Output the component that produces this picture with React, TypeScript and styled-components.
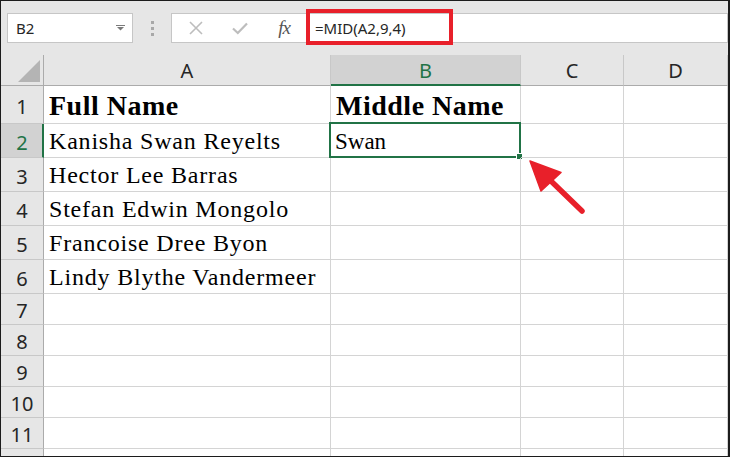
import React from 'react';
import styled, { createGlobalStyle } from 'styled-components';

const GlobalStyle = createGlobalStyle`
  html, body {
    margin: 0;
    padding: 0;
    background: #ffffff;
  }
  * {
    box-sizing: border-box;
  }
`;

const UI_FONT = `"Segoe UI", "Noto Sans", "Open Sans", sans-serif`;
const CELL_FONT = `"Liberation Serif", "Times New Roman", serif`;
const GREEN = '#217346';

// E is only partly in view, so its header letter stays off screen
const COLUMNS = ['A', 'B', 'C', 'D', 'E'];
const VISIBLE_COLUMNS = ['A', 'B', 'C', 'D'];
const COL_WIDTHS = [43, 287, 190, 103, 104, 104];
const ROW_HEIGHTS = [31, 38, 34, 34, 34, 34, 34, 31, 31, 31, 31, 31, 31];
const LAST_LABELLED_ROW = 11;

const NAMES = [
  'Kanisha Swan Reyelts',
  'Hector Lee Barras',
  'Stefan Edwin Mongolo',
  'Francoise Dree Byon',
  'Lindy Blythe Vandermeer'
];

const Frame = styled.div`
  position: relative;
  width: 730px;
  height: 457px;
  overflow: hidden;
  background: #e6e6e6;
  border: 1px solid #1c1c1c;
  border-right-width: 2px;
  display: flex;
  flex-direction: column;
  font-family: ${UI_FONT};
`;

const Toolbar = styled.div`
  height: 54px;
  flex: none;
  display: flex;
  align-items: flex-start;
  padding: 12px 0 0 6px;
`;

const NameBox = styled.div`
  width: 126px;
  height: 30px;
  background: #ffffff;
  border: 1px solid #c6c6c6;
  display: flex;
  align-items: center;
  justify-content: space-between;
  padding: 0 7px 0 8px;
  font-size: 15px;
  color: #262626;
`;

const Grip = styled.div`
  width: 38px;
  height: 30px;
  display: flex;
  flex-direction: column;
  align-items: center;
  justify-content: center;
  gap: 3px;

  span {
    width: 3px;
    height: 3px;
    background: #a8a8a8;
  }
`;

const FormulaTools = styled.div`
  width: 135px;
  height: 30px;
  background: #ffffff;
  border: 1px solid #c6c6c6;
  border-right: none;
  display: flex;
  align-items: center;
  padding-left: 2px;
`;

const ToolSlot = styled.div`
  width: 45px;
  height: 28px;
  display: flex;
  align-items: center;
  justify-content: center;
`;

const FxLabel = styled.span`
  font-family: ${CELL_FONT};
  font-style: italic;
  font-size: 19px;
  color: #555555;
  letter-spacing: -1px;
`;

const FormulaInput = styled.div`
  flex: 1;
  height: 30px;
  background: #ffffff;
  border: 1px solid #c6c6c6;
  display: flex;
  align-items: center;
  padding-left: 8px;
  font-size: 15px;
  color: #262626;
`;

const Highlight = styled.div`
  position: absolute;
  left: 305px;
  top: 8px;
  width: 147px;
  height: 36px;
  border: 4px solid #e8202a;
`;

const Sheet = styled.div`
  flex: 1;
  display: grid;
  grid-template-columns: ${COL_WIDTHS.map((w) => `${w}px`).join(' ')};
  grid-template-rows: ${ROW_HEIGHTS.map((h) => `${h}px`).join(' ')};
  background: #ffffff;
`;

const Corner = styled.div`
  background: #e6e6e6;
  border-right: 1px solid #ababab;
  border-bottom: 1px solid #ababab;
  display: flex;
  align-items: flex-end;
  justify-content: flex-end;
  padding: 0 3px 3px 0;
`;

const ColHeader = styled.div<{ selected?: boolean }>`
  background: ${(p) => (p.selected ? '#d2d2d2' : '#e6e6e6')};
  color: ${(p) => (p.selected ? GREEN : '#262626')};
  border-right: 1px solid #c8c8c8;
  border-bottom: ${(p) => (p.selected ? `2px solid ${GREEN}` : '1px solid #ababab')};
  display: flex;
  align-items: center;
  justify-content: center;
  padding-top: ${(p) => (p.selected ? '2px' : '1px')};
  font-size: 20px;
  line-height: 1;
`;

const RowHeader = styled.div<{ selected?: boolean }>`
  background: ${(p) => (p.selected ? '#d2d2d2' : '#e6e6e6')};
  color: ${(p) => (p.selected ? GREEN : '#262626')};
  border-right: ${(p) => (p.selected ? `2px solid ${GREEN}` : '1px solid #ababab')};
  border-bottom: 1px solid #c8c8c8;
  display: flex;
  align-items: center;
  justify-content: center;
  padding: 4px 0 0 ${(p) => (p.selected ? '1px' : '0')};
  font-size: 20px;
  line-height: 1;
`;

const Cell = styled.div<{ bold?: boolean }>`
  position: relative;
  border-right: 1px solid #d4d4d4;
  border-bottom: 1px solid #d4d4d4;
  display: flex;
  align-items: flex-end;
  padding: 0 0 ${(p) => (p.bold ? '3px' : '4px')} 5px;
  font-family: ${CELL_FONT};
  font-size: ${(p) => (p.bold ? '28px' : '24px')};
  font-weight: ${(p) => (p.bold ? 700 : 400)};
  letter-spacing: ${(p) => (p.bold ? '0.5px' : '0.8px')};
  line-height: 1;
  color: #000000;
  white-space: nowrap;
`;

const ActiveCell = styled.div`
  position: relative;
  border-right: 1px solid #d4d4d4;
  border-bottom: 1px solid #d4d4d4;
  display: flex;
  align-items: flex-end;
  padding: 0 0 4px 4px;
  font-family: ${CELL_FONT};
  font-size: 23px;
  line-height: 1;
  color: #000000;
`;

const Selection = styled.div`
  position: absolute;
  left: -2px;
  top: -2px;
  right: -1px;
  bottom: -1px;
  border: 2px solid ${GREEN};
  pointer-events: none;
`;

const FillHandle = styled.div`
  position: absolute;
  right: -4px;
  bottom: -4px;
  width: 7px;
  height: 7px;
  background: ${GREEN};
  border: 1px solid #ffffff;
`;

const Arrow = styled.svg`
  position: absolute;
  left: 519px;
  top: 149px;
`;

function DropdownIcon() {
  return (
    <svg width="9" height="6" viewBox="0 0 9 6">
      <rect x="0" y="0" width="9" height="1" fill="#7a7a7a" />
      <path d="M1 2 H8 L4.5 5.5 Z" fill="#7a7a7a" />
    </svg>
  );
}

function CancelIcon() {
  return (
    <svg width="14" height="14" viewBox="0 0 14 14">
      <path d="M1 1 L13 13 M13 1 L1 13" stroke="#bdbdbd" strokeWidth="1.6" />
    </svg>
  );
}

function EnterIcon() {
  return (
    <svg width="16" height="13" viewBox="0 0 16 13">
      <path d="M1 6.5 L5.8 11 L15 1.5" stroke="#bdbdbd" strokeWidth="2.2" fill="none" />
    </svg>
  );
}

function SelectAllIcon() {
  return (
    <svg width="22" height="22" viewBox="0 0 22 22">
      <path d="M22 0 V22 H0 Z" fill="#b4b4b4" />
    </svg>
  );
}

function cellContent(row: number, col: number) {
  if (row === 1 && col === 0) return 'Full Name';
  if (row === 1 && col === 1) return 'Middle Name';
  if (col === 0 && row >= 2 && row <= 6) return NAMES[row - 2];
  return '';
}

export default function App() {
  const dataRows = ROW_HEIGHTS.length - 1;

  return (
    <>
      <GlobalStyle />
      <Frame>
        <Toolbar>
          <NameBox>
            <span>B2</span>
            <DropdownIcon />
          </NameBox>
          <Grip>
            <span />
            <span />
            <span />
          </Grip>
          <FormulaTools>
            <ToolSlot>
              <CancelIcon />
            </ToolSlot>
            <ToolSlot>
              <EnterIcon />
            </ToolSlot>
            <ToolSlot>
              <FxLabel>fx</FxLabel>
            </ToolSlot>
          </FormulaTools>
          <FormulaInput>=MID(A2,9,4)</FormulaInput>
        </Toolbar>

        <Sheet>
          <Corner>
            <SelectAllIcon />
          </Corner>
          {COLUMNS.map((c) => (
            <ColHeader key={c} selected={c === 'B'}>
              {VISIBLE_COLUMNS.includes(c) ? c : ''}
            </ColHeader>
          ))}

          {Array.from({ length: dataRows }, (_, i) => {
            const row = i + 1;
            return (
              <React.Fragment key={row}>
                <RowHeader selected={row === 2}>{row <= LAST_LABELLED_ROW ? row : ''}</RowHeader>
                {COLUMNS.map((c, col) =>
                  row === 2 && col === 1 ? (
                    <ActiveCell key={c}>
                      Swan
                      <Selection>
                        <FillHandle />
                      </Selection>
                    </ActiveCell>
                  ) : (
                    <Cell key={c} bold={row === 1}>
                      {cellContent(row, col)}
                    </Cell>
                  )
                )}
              </React.Fragment>
            );
          })}
        </Sheet>

        <Highlight />
        <Arrow width="72" height="70" viewBox="0 0 72 70">
          <path d="M32 32 L62 61" stroke="#e8202a" strokeWidth="5.5" strokeLinecap="round" />
          <path d="M10 11 L41 22.5 L21 41 Z" fill="#e8202a" stroke="#e8202a" strokeWidth="1.5" strokeLinejoin="round" />
        </Arrow>
      </Frame>
    </>
  );
}
